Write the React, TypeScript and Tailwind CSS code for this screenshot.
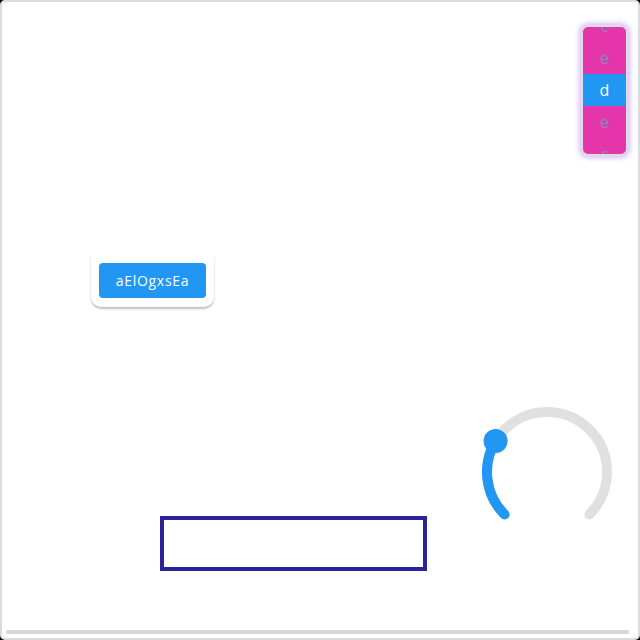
import React from 'react'

const pickerItems = ['c', 'e', 'd', 'e', 'c']

function Picker() {
  return (
    <div className="absolute left-[579px] top-[23px] w-[47px] h-[131px] rounded-[7px] border-2 border-[#dedede] shadow-[0_0_5px_2px_rgba(190,150,255,0.65)] overflow-hidden bg-[#e535ab]">
      <div className="flex flex-col -mt-[17px]">
        {pickerItems.map((item, i) => (
          <div
            key={i}
            className={`h-[32px] flex items-center justify-center text-[16px] ${
              i === 2 ? 'bg-[#2196f3] text-white' : 'text-[#7f8cc4]'
            }`}
          >
            {item}
          </div>
        ))}
      </div>
    </div>
  )
}

function Gauge() {
  const cx = 65
  const cy = 65
  const r = 60
  const pt = (deg: number) => {
    const a = (deg * Math.PI) / 180
    return [cx + r * Math.cos(a), cy + r * Math.sin(a)]
  }
  const [sx, sy] = pt(135)
  const [ex, ey] = pt(45)
  const [kx, ky] = pt(211)
  return (
    <svg className="absolute left-[480px] top-[405px]" width="130" height="125" viewBox="0 0 130 125">
      <path
        d={`M ${sx} ${sy} A ${r} ${r} 0 1 1 ${ex} ${ey}`}
        fill="none"
        stroke="#e0e0e0"
        strokeWidth="10"
        strokeLinecap="round"
      />
      <path
        d={`M ${sx} ${sy} A ${r} ${r} 0 0 1 ${kx} ${ky}`}
        fill="none"
        stroke="#2196f3"
        strokeWidth="10"
        strokeLinecap="round"
      />
      <circle cx={kx} cy={ky} r="12" fill="#2196f3" />
    </svg>
  )
}

export default function App() {
  return (
    <div className="w-[640px] h-[640px] bg-black">
      <div
        className="relative w-full h-full bg-white border-2 border-[#dcdcdc] rounded-[5px] overflow-hidden"
        style={{ fontFamily: '"Open Sans", sans-serif' }}
      >
        <Picker />

        <div className="absolute left-[89px] top-[254px] w-[123px] h-[51px] bg-white rounded-b-[10px] shadow-[0_2px_2px_rgba(0,0,0,0.25)] flex justify-center pt-[7px]">
          <button className="h-[35px] w-[107px] rounded-[4px] bg-[#2196f3] text-white text-[14px] tracking-[0.7px]">
            aElOgxsEa
          </button>
        </div>

        <Gauge />

        <div className="absolute left-[158px] top-[514px] w-[267px] h-[55px] border-4 border-[#2c239b]" />

        <div className="absolute left-[4px] right-[9px] top-[628px] h-[4px] rounded-full bg-[#d6d6d6]" />
      </div>
    </div>
  )
}
